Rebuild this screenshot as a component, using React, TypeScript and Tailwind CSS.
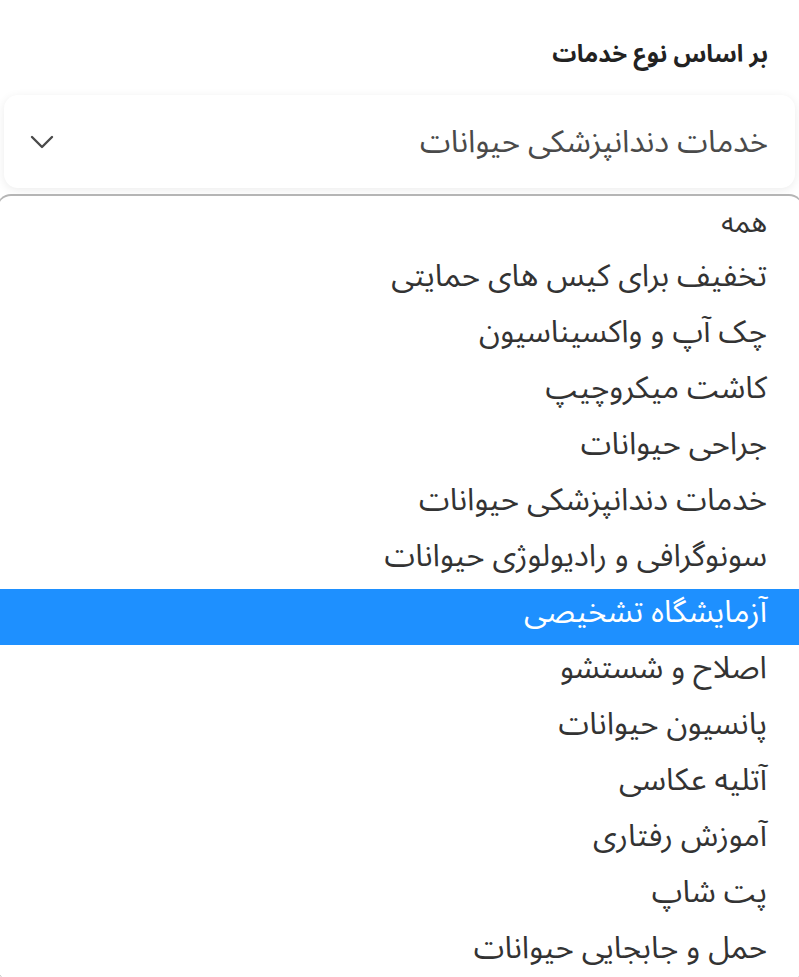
import React from 'react'

const options = [
  'همه',
  'تخفیف برای کیس های حمایتی',
  'چک آپ و واکسیناسیون',
  'کاشت میکروچیپ',
  'جراحی حیوانات',
  'خدمات دندانپزشکی حیوانات',
  'سونوگرافی و رادیولوژی حیوانات',
  'آزمایشگاه تشخیصی',
  'اصلاح و شستشو',
  'پانسیون حیوانات',
  'آتلیه عکاسی',
  'آموزش رفتاری',
  'پت شاپ',
  'حمل و جابجایی حیوانات',
]

const selected = 'آزمایشگاه تشخیصی'

function Chevron() {
  return (
    <svg width="24" height="14" viewBox="0 0 24 14" fill="none" stroke="#4a4a4a" strokeWidth="2.4" strokeLinecap="round" strokeLinejoin="round">
      <path d="M2 2l10 10 10-10" />
    </svg>
  )
}

export default function App() {
  return (
    <div
      dir="rtl"
      className="w-[799px] h-[977px] overflow-hidden bg-white"
      style={{ fontFamily: '"Noto Sans Arabic", "DejaVu Sans", sans-serif' }}
    >
      <div className="pt-[39px] pr-[31px] pb-[24px]">
        <h3 className="text-[24px] font-bold text-[#222] leading-[32px]">بر اساس نوع خدمات</h3>
      </div>

      <div className="mx-[4px] h-[93px] rounded-[14px] bg-white shadow-[0_2px_10px_rgba(0,0,0,0.08)] flex items-center justify-between pr-[27px] pl-[26px]">
        <span className="text-[31px] text-[#4a4a4a] leading-[40px]">خدمات دندانپزشکی حیوانات</span>
        <Chevron />
      </div>

      <div className="mt-[6px] -ml-[3px] -mr-[4px] rounded-[14px] border-t-2 border-x border-[#b5b5b5] bg-white">
        <ul className="pt-[5px]">
          {options.map((opt, i) => (
            <li
              key={opt}
              className={
                'flex items-center pr-[35px] leading-[36px] ' +
                (opt === selected ? 'bg-[#1e90ff] text-white' : 'text-[#333]') +
                (i === 0 ? ' text-[28px] h-[52px] pb-[6px]' : ' text-[31px] h-[56px] pb-[10px]')
              }
            >
              {opt}
            </li>
          ))}
        </ul>
      </div>
    </div>
  )
}
